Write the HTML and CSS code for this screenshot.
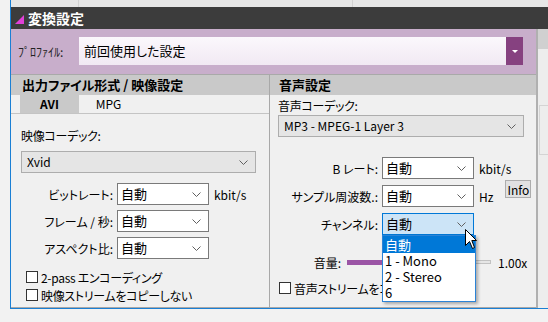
FILE: index.html
```html
<!DOCTYPE html>
<html lang="ja">
<head>
  <meta charset="UTF-8" />
  <title>変換設定</title>
  <link rel="stylesheet" href="styles.css">
</head>
<body>
  <div class="window">
    <div class="strip"><span class="sep s1"></span><span class="sep s2"></span></div>
    <div class="titlebar"><span class="tri"></span>変換設定</div>
    <div class="body">
      <div class="content">
        <div class="profile">
          <span class="plabel">ﾌﾟﾛﾌｧｲﾙ:</span>
          <div class="pcombo">
            <span class="ptext">前回使用した設定</span>
            <span class="pbtn"><span class="ptri"></span></span>
          </div>
        </div>
        <div class="panels">
          <section class="panel left">
            <div class="phead">出力ファイル形式 / 映像設定</div>
            <div class="tabs">
              <span class="tab active">AVI</span>
              <span class="tab">MPG</span>
            </div>
            <div class="tabbody">
              <div class="label">映像コーデック:</div>
              <div class="combo gray wide">Xvid<svg class="chev" width="9" height="5" viewBox="0 0 9 5"><polyline points="0.5,0.5 4.5,4.5 8.5,0.5" fill="none" stroke="#606060" stroke-width="1"/></svg></div>
              <div class="rows">
                <div class="row">
                  <span class="rl">ビットレート:</span>
                  <div class="combo sel">自動<svg class="chev" width="9" height="5" viewBox="0 0 9 5"><polyline points="0.5,0.5 4.5,4.5 8.5,0.5" fill="none" stroke="#606060" stroke-width="1"/></svg></div>
                  <span class="unit">kbit/s</span>
                </div>
                <div class="row">
                  <span class="rl">フレーム / 秒:</span>
                  <div class="combo sel">自動<svg class="chev" width="9" height="5" viewBox="0 0 9 5"><polyline points="0.5,0.5 4.5,4.5 8.5,0.5" fill="none" stroke="#606060" stroke-width="1"/></svg></div>
                </div>
                <div class="row">
                  <span class="rl">アスペクト比:</span>
                  <div class="combo sel">自動<svg class="chev" width="9" height="5" viewBox="0 0 9 5"><polyline points="0.5,0.5 4.5,4.5 8.5,0.5" fill="none" stroke="#606060" stroke-width="1"/></svg></div>
                </div>
              </div>
              <div class="checks">
                <label class="check"><span class="box"></span>2-pass エンコーディング</label>
                <label class="check"><span class="box"></span>映像ストリームをコピーしない</label>
              </div>
            </div>
          </section>
          <section class="panel right">
            <div class="phead">音声設定</div>
            <div class="abody">
              <div class="label">音声コーデック:</div>
              <div class="combo gray awide">MP3 - MPEG-1 Layer 3<svg class="chev" width="9" height="5" viewBox="0 0 9 5"><polyline points="0.5,0.5 4.5,4.5 8.5,0.5" fill="none" stroke="#606060" stroke-width="1"/></svg></div>
              <div class="arows">
                <div class="row">
                  <span class="rl">B レート:</span>
                  <div class="combo sel">自動<svg class="chev" width="9" height="5" viewBox="0 0 9 5"><polyline points="0.5,0.5 4.5,4.5 8.5,0.5" fill="none" stroke="#606060" stroke-width="1"/></svg></div>
                  <span class="unit">kbit/s</span>
                </div>
                <div class="row">
                  <span class="rl">サンプル周波数.:</span>
                  <div class="combo sel">自動<svg class="chev" width="9" height="5" viewBox="0 0 9 5"><polyline points="0.5,0.5 4.5,4.5 8.5,0.5" fill="none" stroke="#606060" stroke-width="1"/></svg></div>
                  <span class="unit">Hz</span>
                  <button class="info">Info</button>
                </div>
                <div class="row">
                  <span class="rl">チャンネル:</span>
                  <div class="combo sel open">自動<svg class="chev" width="9" height="5" viewBox="0 0 9 5"><polyline points="0.5,0.5 4.5,4.5 8.5,0.5" fill="none" stroke="#606060" stroke-width="1"/></svg>
                    <ul class="list">
                      <li class="on">自動</li>
                      <li>1 - Mono</li>
                      <li>2 - Stereo</li>
                      <li>6</li>
                    </ul>
                    <svg class="cursor" width="13" height="21" viewBox="0 0 13 21"><path d="M0.5,0.5 L0.5,16.5 L4.5,12.5 L7.5,19.5 L9.5,18.5 L6.8,11.5 L11.5,11.5 Z" fill="#fff" stroke="#000" stroke-width="1"/></svg>
                  </div>
                </div>
              </div>
              <div class="volume">
                <span class="vl">音量:</span>
                <div class="slider"><span class="fill"></span></div>
                <span class="vval">1.00x</span>
              </div>
              <label class="check acheck"><span class="box"></span>音声ストリームをコピーしない</label>
            </div>
          </section>
        </div>
      </div>
      <div class="side"><span class="sidetop"></span><span class="sideline"></span></div>
    </div>
  </div>
</body>
</html>
```

FILE: styles.css
```css
* { box-sizing: border-box; }
body {
  margin: 0; width: 548px; height: 322px; overflow: hidden;
  background: #f2f2f2; color: #000;
  font-family: "Noto Sans CJK JP", sans-serif; font-size: 12px;
  font-feature-settings: "palt";
}
.window {
  width: 538px; height: 309px; margin-left: 10px;
  border-left: 1px solid #1a7fd4; border-bottom: 1px solid #1a7fd4;
  display: flex; flex-direction: column; background: #f0f0f0;
}
.strip { flex-shrink: 0; height: 7px; background: #e6e6e6; display: flex; }
.sep { width: 1px; background: #d2d2d2; }
.s1 { margin-left: 67px; }
.s2 { margin-left: 273px; }
.titlebar {
  flex-shrink: 0; height: 22px; background: #3c3c3c; color: #fff;
  font-size: 14px; font-weight: bold; line-height: 22px;
  display: flex; align-items: center; padding-left: 4px;
}
.tri {
  width: 0; height: 0; margin-right: 4px; margin-top: 2px;
  border-left: 9px solid transparent; border-bottom: 9px solid #e040d8;
}
.body { flex: 1; min-height: 0; display: flex; }
.content { width: 526px; display: flex; flex-direction: column; }
.side { flex: 1; border-left: 2px solid #b0b0b0; background: #ededed; display: flex; flex-direction: column; }
.sidetop { height: 20px; background: #d0d0d0; }
.sideline { margin: 56px 0 0 1px; height: 50px; width: 9px; border: 1px solid #d4d4d4; border-right: 0; }

.profile {
  flex-shrink: 0; height: 46px; background: #c8aecb; border-bottom: 1px solid #a9a9a9;
  display: flex; align-items: center; padding: 0 0 1px 7px;
}
.plabel { width: 61px; font-size: 12px; color: #222; }
.pcombo { width: 444px; height: 28px; display: flex; }
.ptext {
  flex: 1; padding-left: 5px; line-height: 28px; font-size: 13px;
  background: linear-gradient(#fbf8fc, #f1e9f3);
}
.pbtn { width: 17px; background: #864180; display: flex; align-items: center; justify-content: center; }
.ptri { width: 0; height: 0; border-left: 3px solid transparent; border-right: 3px solid transparent; border-top: 3px solid #fff; }

.panels { flex: 1; min-height: 0; display: flex; }
.panel { display: flex; flex-direction: column; border-bottom: 1px solid #a8a8a8; }
.left { width: 259px; border-right: 1px solid #a8a8a8; }
.right { flex: 1; }
.phead {
  flex-shrink: 0; height: 20px; line-height: 20px; background: #c9c9c9;
  font-size: 13px; font-weight: bold; padding-left: 11px;
}
.right .phead { padding-left: 9px; }
.tabs { flex-shrink: 0; height: 18px; display: flex; padding-left: 9px; }
.tab { width: 59px; text-align: center; line-height: 18px; }
.tab.active { background: #c9c9c9; font-weight: bold; }
.tabbody { flex: 1; border-top: 1px solid #c4c4c4; padding: 14px 0 0 10px; }
.label { line-height: 16px; letter-spacing: -0.3px; }
.combo {
  position: relative; height: 22px; line-height: 20px;
  background: #fff; border: 1px solid #7a7a7a; padding-left: 3px;
}
.combo.sel { width: 92px; font-size: 13px; }
.combo.gray { background: #e5e5e5; border-color: #adadad; padding-left: 5px; }
.combo.open { background: #cce4f7; border-color: #0078d7; }
.chev { position: absolute; right: 7px; top: 8px; }
.wide { width: 235px; margin-top: 7px; }
.rows { display: flex; flex-direction: column; gap: 5px; margin-top: 10px; }
.row { display: flex; align-items: center; gap: 4px; height: 22px; }
.rows .rl { width: 92px; }
.rl { text-align: right; }
.unit { padding-left: 1px; }
.checks { margin-top: 9px; padding-left: 5px; }
.check { display: flex; align-items: center; height: 18px; letter-spacing: -0.3px; }
.box { width: 12px; height: 12px; border: 1px solid #333; background: #fff; margin-right: 3px; }

.abody { flex: 1; padding: 3px 0 0 8px; }
.awide { width: 246px; margin-top: 1px; }
.arows { display: flex; flex-direction: column; gap: 6px; margin-top: 20px; }
.arows .rl { width: 100px; }
.info {
  align-self: flex-start; margin: -5px 0 0 8px; width: 26px; height: 18px; padding: 0;
  background: #e1e1e1; border: 1px solid #adadad;
  font: 12px "Noto Sans CJK JP", sans-serif;
}
.list {
  position: absolute; left: -1px; top: 21px; width: 94px; margin: 0; padding: 0;
  list-style: none; background: #fff; border: 1px solid #2b83d6;
  box-shadow: 2px 2px 3px rgba(0,0,0,0.3); z-index: 2;
}
.list li { height: 16px; line-height: 16px; padding-left: 2px; font-size: 13px; }
.list li.on { background: #0078d7; color: #fff; height: 17px; line-height: 17px; }
.cursor { position: absolute; left: 82px; top: 15px; z-index: 3; }
.volume { display: flex; align-items: center; height: 16px; margin-top: 19px; }
.vl { width: 63px; text-align: right; margin-right: 6px; }
.slider { width: 144px; height: 4px; border: 1px solid #c2c2c2; background: #e6e6e6; position: relative; }
.fill { position: absolute; left: -1px; top: -1px; width: 75px; height: 5px; background: #9b55a5; }
.vval { margin-left: 7px; }
.acheck { margin-top: 9px; padding-left: 1px; }
```
